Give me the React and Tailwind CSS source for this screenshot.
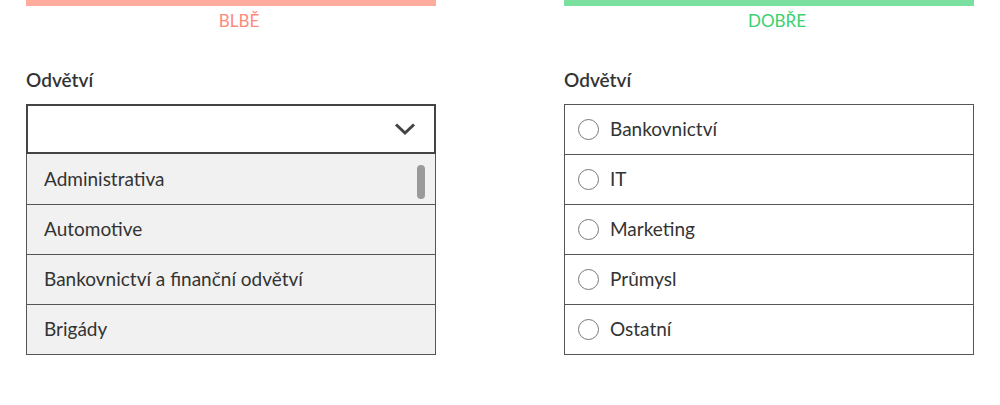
import React from 'react';

const fontStack = { fontFamily: 'Lato, "Open Sans", "Liberation Sans", sans-serif' };

const badOptions = ['Administrativa', 'Automotive', 'Bankovnictví a finanční odvětví', 'Brigády'];
const goodOptions = ['Bankovnictví', 'IT', 'Marketing', 'Průmysl', 'Ostatní'];

function Header({ barClass, textClass, label }) {
  return (
    <div>
      <div className={`h-[6px] ${barClass}`} />
      <div className={`pl-[16px] text-center text-[17px] leading-[30px] ${textClass}`}>{label}</div>
    </div>
  );
}

function Label() {
  return (
    <div className="mt-[32px] h-[36px] text-[19px] font-semibold leading-[24px] text-[#333]">Odvětví</div>
  );
}

function BadSelect() {
  return (
    <div>
      <div className="flex h-[50px] items-center justify-end border-2 border-[#444] bg-white pr-[18px]">
        <svg width="22" height="14" viewBox="0 0 22 14" fill="none">
          <path d="M2 2.5 L11 11 L20 2.5" stroke="#444" strokeWidth="3" />
        </svg>
      </div>
      <div className="relative border-x border-b border-[#555] bg-[#f1f1f1]">
        {badOptions.map((opt, i) => (
          <div
            key={opt}
            className={`flex h-[50px] items-center pl-[17px] text-[19px] text-[#333] ${i > 0 ? 'border-t border-[#555]' : ''}`}
          >
            {opt}
          </div>
        ))}
        <div className="absolute right-[10px] top-[11px] h-[34px] w-[8px] rounded-full bg-[#9a9a9a]" />
      </div>
    </div>
  );
}

function GoodRadios() {
  return (
    <div className="border-x border-b border-[#555] bg-white">
      {goodOptions.map((opt) => (
        <div
          key={opt}
          className="flex h-[50px] items-center gap-[11px] border-t border-[#555] pl-[13px] text-[19px] text-[#333]"
        >
          <span className="h-[21px] w-[21px] rounded-full border-[1.5px] border-[#777]" />
          {opt}
        </div>
      ))}
    </div>
  );
}

export default function App() {
  return (
    <div className="h-[405px] w-[1000px] bg-white" style={fontStack}>
      <div className="flex gap-[128px] px-[26px]">
        <div className="w-[410px]">
          <Header barClass="bg-[#ffab9e]" textClass="text-[#ff8a7a]" label="BLBĚ" />
          <Label />
          <BadSelect />
        </div>
        <div className="w-[410px]">
          <Header barClass="bg-[#7be09f]" textClass="text-[#3bd16e]" label="DOBŘE" />
          <Label />
          <GoodRadios />
        </div>
      </div>
    </div>
  );
}
